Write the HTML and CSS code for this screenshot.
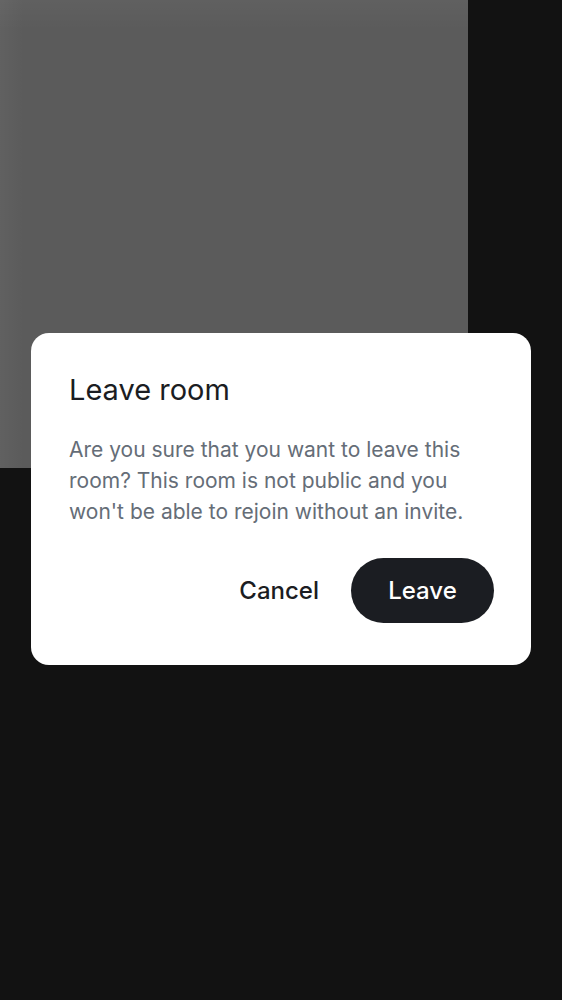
FILE: index.html
```html
<!DOCTYPE html>
<html>
<head>
<meta charset="utf-8">
<link rel="stylesheet" href="styles.css">
</head>
<body>
<div class="tile"></div>
<div class="scrim">
  <div class="dialog">
    <h1 class="title">Leave room</h1>
    <p class="body">Are you sure that you want to leave this room? This room is not public and you won't be able to rejoin without an invite.</p>
    <div class="actions">
      <button class="btn-text">Cancel</button>
      <button class="btn-filled">Leave</button>
    </div>
  </div>
</div>
</body>
</html>
```
FILE: styles.css
```css
html, body {
  margin: 0;
  padding: 0;
  background: #121212;
  height: 100%;
  font-family: Inter, "Noto Sans", sans-serif;
}
.tile {
  width: 468px;
  height: 468px;
  background:
    linear-gradient(to right, rgba(255,255,255,0.035), rgba(255,255,255,0) 24px),
    linear-gradient(to bottom, rgba(255,255,255,0.03), rgba(255,255,255,0) 30px),
    #5b5b5b;
}
.scrim {
  position: fixed;
  inset: 0;
  display: flex;
  justify-content: center;
  padding-top: 333px;
  box-sizing: border-box;
}
.dialog {
  width: 500px;
  height: 332px;
  box-sizing: border-box;
  background: #ffffff;
  border-radius: 18px;
  padding: 33px 37px 0 38px;
  display: flex;
  flex-direction: column;
}
.title {
  margin: 0;
  font-size: 29px;
  font-weight: 400;
  line-height: 48px;
  color: #1b1d22;
}
.body {
  margin: 20px 0 0 0;
  font-size: 21px;
  line-height: 31px;
  color: #656d77;
}
.actions {
  margin-top: 31px;
  display: flex;
  justify-content: flex-end;
  align-items: center;
  gap: 32px;
}
.btn-text {
  border: none;
  background: none;
  font-family: inherit;
  font-size: 24px;
  font-weight: 500;
  color: #1b1d22;
  padding: 0;
}
.btn-filled {
  border: none;
  background: #1b1d22;
  color: #ffffff;
  font-family: inherit;
  font-size: 24px;
  font-weight: 500;
  width: 143px;
  height: 65px;
  border-radius: 33px;
  padding: 0;
}
```
